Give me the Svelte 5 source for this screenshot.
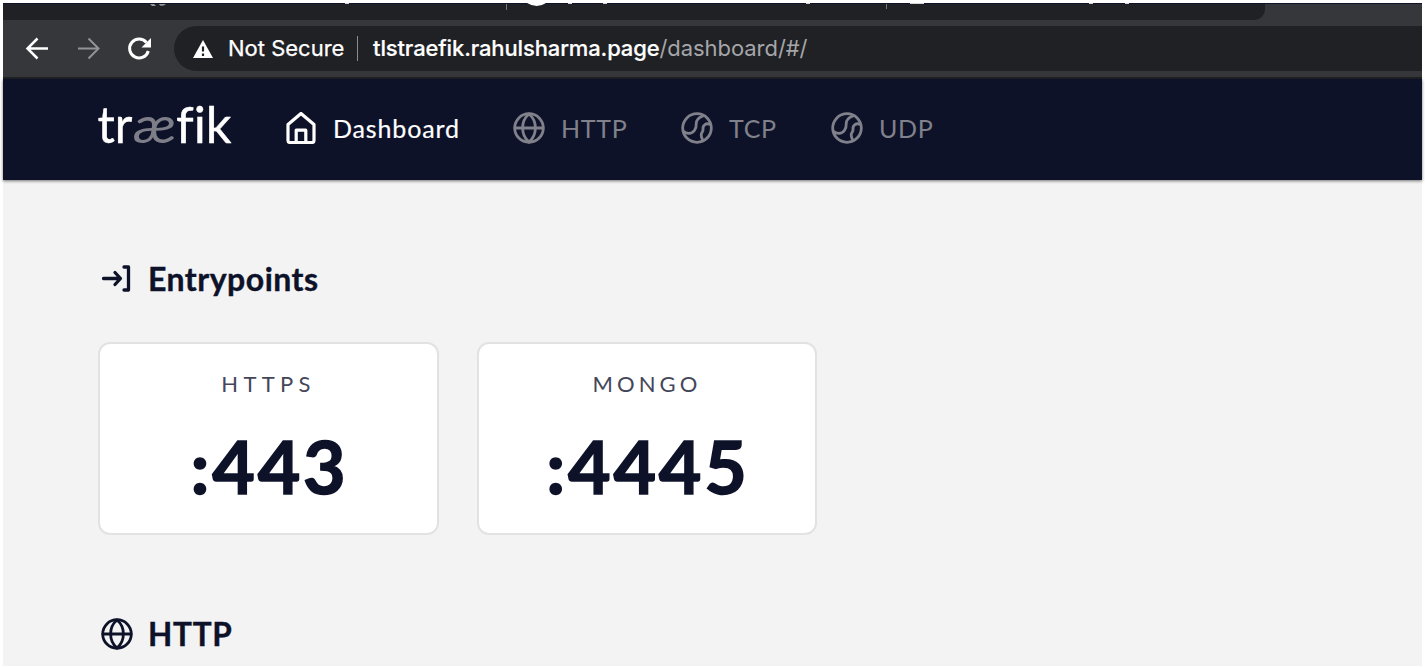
<script>
  const links = [
    { name: 'Dashboard', icon: 'home' },
    { name: 'HTTP', icon: 'globe' },
    { name: 'TCP', icon: 'ball' },
    { name: 'UDP', icon: 'ball' }
  ];
  const entrypoints = [
    { name: 'HTTPS', address: ':443' },
    { name: 'MONGO', address: ':4445' }
  ];
</script>

{#snippet icon(kind)}
  <svg class="icon" viewBox="0 0 32 32" width="32" height="32" fill="none" stroke="currentColor" stroke-width="2.8" stroke-linecap="round" stroke-linejoin="round">
    {#if kind === 'home'}
      <path stroke-width="3.2" d="M3 12.5 16 1.5 29 12.5V28.5Q29 30.5 27 30.5H5Q3 30.5 3 28.5ZM11.2 30V18.2H20.8V30" />
    {:else if kind === 'globe'}
      <circle cx="16" cy="16" r="14.3" />
      <path d="M2 16H30M16 2C7.5 9 7.5 23 16 30M16 2C24.5 9 24.5 23 16 30" />
    {:else if kind === 'ball'}
      <circle cx="16" cy="16" r="14.3" />
      <path d="M22 4C17.5 5.5 15 8 15.2 12C15.5 17 12.5 21.2 8 21.4Q4.5 21.5 2.8 19.5M29.5 12.5C25 10.5 21.5 13 22 17.5C22.2 20 20.2 20.5 20.2 23Q20.2 26 22 28.5" />
    {:else}
      <path stroke-width="3.3" d="M2.5 15.5H19M14 9.5 19.5 15.500 14 21.5M23 4H27.500V27H23" />
    {/if}
  </svg>
{/snippet}

<div class="window">
  <div class="tabs">
    <div class="strip">
      <svg width="1262" height="8" viewBox="0 0 1262 8">
        <path d="M147 0H151L153 2H149ZM156 0H163Q161 2.5 157 1.5Z" fill="#97989c" />
        <path d="M524 -1H543Q534 5 524 -1Z" fill="#fff" />
        <path d="M342 -.5H346M565 -.5H569M600 -.5H604M803 -.5H807M907 -.5H921M1086 -.5H1090M1122 -.5H1126" stroke="#d5d5d8" />
        <path d="M503.500 0V6M883.500 0V5" stroke="#77787c" />
      </svg>
    </div>
  </div>
  <div class="toolbar">
    <svg width="160" height="46" viewBox="0 0 160 46" fill="none" stroke="#fff" stroke-width="2.5">
      <path d="M45 22.5H25M34.5 12.5 24.5 22.5 34.5 32.5" />
      <path d="M75 22.5H95M85.5 12.5 95.5 22.5 85.5 32.5" stroke="#929397" stroke-width="2" />
      <path d="M143.5 16.5A9.5 9.5 0 1 0 145.3 25" stroke-width="3" />
      <path d="M148 12V21.5H138.5Z" fill="#fff" stroke="none" />
    </svg>
    <div class="omnibox">
      <svg width="20" height="18" viewBox="0 0 20 18"><path d="M10 0 20 18H0Z" fill="#fff" /><path d="M10 6.5V11.5M10 13.5V16" stroke="#202124" stroke-width="2.2" /></svg>
      <span class="secure">Not Secure</span>
      <span class="bar"></span>
      <span class="url"><b>tlstraefik.rahulsharma.page</b><span class="path">/dashboard/#/</span></span>
    </div>
  </div>

  <header>
    <svg class="logo" width="140" height="76" viewBox="-2 -14 140 76">
      <text x="-0.5" y="39.5" textLength="35" lengthAdjust="spacingAndGlyphs">tr</text>
      <text class="ae" x="35.5" y="39.5" textLength="43" lengthAdjust="spacingAndGlyphs">æ</text>
      <text x="78" y="39.5" textLength="55.500" lengthAdjust="spacingAndGlyphs">fik</text>
    </svg>
    <nav>
      {#each links as link, i}
        <a class="link {link.name.toLowerCase()}" class:active={i === 0}>{@render icon(link.icon)}<span>{link.name}</span></a>
      {/each}
    </nav>
  </header>

  <main>
    <h2>{@render icon('entry')}<span class="entry-title">Entrypoints</span></h2>
    <div class="cards">
      {#each entrypoints as e}
        <section class="card">
          <div class="name {e.name.toLowerCase()}-name">{e.name}</div>
          <div class="address">{e.address}</div>
        </section>
      {/each}
    </div>
    <h2 class="second">{@render icon('globe')}<span class="http-title">HTTP</span></h2>
  </main>
</div>

<style>
  :global(body) { margin: 0; background: #fff; overflow: hidden; }
  .window { box-sizing: border-box; width: 1425px; height: 668px; padding: 3px 3px 2px; display: flex; flex-direction: column; font-family: Lato, sans-serif; color: #0e1229; }
  .tabs { height: 17px; background: #36373b; border-top: 1px solid #0f1228; box-sizing: border-box; }
  .strip { width: 1262px; height: 16px; display: flex; background: #202124; border-radius: 0 0 11px 0; }
  .strip svg { overflow: visible; }
  .toolbar { height: 59px; box-sizing: border-box; background: #36373b; border-bottom: 2px solid #202124; display: flex; padding-top: 6px; }
  .toolbar > svg { flex: none; margin-right: 11px; }
  .omnibox { flex: 1; height: 45px; border-radius: 23px 0 0 23px; background: #202124; display: flex; align-items: center; padding-left: 19px; color: #fff; font: 22px Inter, sans-serif; white-space: nowrap; }
  .secure { margin-left: 15px; width: 116px; padding-bottom: 1px; -webkit-text-stroke: .25px #fff; }
  .bar { width: 1px; height: 25px; background: #8b8c90; margin: 0 15px 0 13px; }
  .url { letter-spacing: -.06px; padding-bottom: 1px; }
  .url b { font-weight: 500; letter-spacing: -.13px; -webkit-text-stroke: .2px #fff; }
  .path { color: #a5a6aa; }
  header { height: 101px; flex: none; box-sizing: border-box; background: #0e1229; display: flex; padding: 10px 0 0 93px; box-shadow: 0 1px 3px #0008; z-index: 1; }
  .logo { flex: none; }
  .logo text { font: 51px Lato, sans-serif; font-variant-ligatures: none; fill: #fff; stroke: #fff; stroke-width: .4px; stroke-linejoin: round; }
  .logo .ae { font-style: italic; fill: #7d7e88; stroke: #7d7e88; stroke-width: .1px; }
  nav { display: flex; height: 50px; margin: 14px 0 0 49px; }
  .link { display: flex; align-items: center; gap: 16px; color: #80818b; font-size: 25px; letter-spacing: .7px; }
  .link.active { color: #fff; -webkit-text-stroke: .2px #fff; }
  .link span { white-space: nowrap; padding-bottom: 1px; }
  .dashboard { width: 228px; letter-spacing: .85px; }
  .http { width: 168px; }
  .tcp { width: 150px; }
  .icon { flex: none; }
  main { flex: 1; min-height: 0; background: #f3f3f4; padding: 79px 95px 0; }
  h2 { margin: 0 0 0 3px; height: 40px; display: flex; align-items: center; gap: 15px; font-size: 32px; line-height: 40px; font-weight: 700; -webkit-text-stroke: .4px #0e1229; }
  .entry-title { letter-spacing: .5px; }
  .http-title { letter-spacing: .75px; padding-bottom: 1px; font-size: 31.5px; }
  .cards { display: flex; gap: 38px; margin-top: 43px; }
  .card { box-sizing: border-box; width: 341px; height: 193px; border: 2px solid #e2e2e3; border-radius: 12px; background: #fff; text-align: center; }
  .card + .card { width: 340px; }
  .name { margin-top: 26px; font-size: 22px; line-height: 28px; letter-spacing: 5.3px; color: #44475a; }
  .mongo-name { letter-spacing: 4.1px; }
  .address { margin-top: 24px; padding-left: 2px; font-size: 73.5px; line-height: 88px; font-weight: 700; letter-spacing: 2.8px; -webkit-text-stroke: 1.5px #0e1229; stroke-linejoin: round; }
  h2.second { margin-top: 79px; }
</style>
